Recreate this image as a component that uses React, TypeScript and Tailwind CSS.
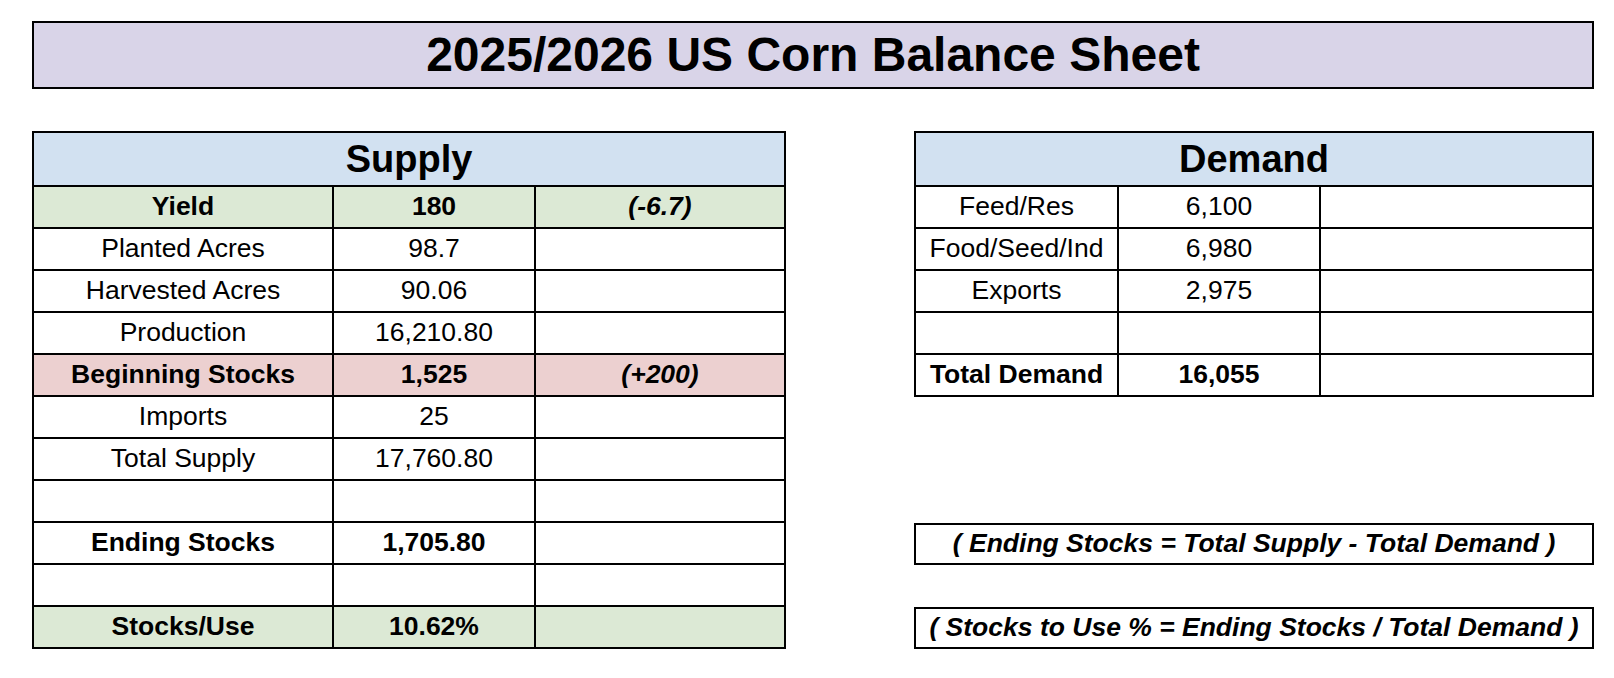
const font = { fontFamily: '"Liberation Sans", Arial, Helvetica, sans-serif' }

type Row = {
  label: string
  value: string
  note?: string
  bold?: boolean
  tone?: "green" | "pink"
}

const supplyRows: Row[] = [
  { label: "Yield", value: "180", note: "(-6.7)", bold: true, tone: "green" },
  { label: "Planted Acres", value: "98.7" },
  { label: "Harvested Acres", value: "90.06" },
  { label: "Production", value: "16,210.80" },
  { label: "Beginning Stocks", value: "1,525", note: "(+200)", bold: true, tone: "pink" },
  { label: "Imports", value: "25" },
  { label: "Total Supply", value: "17,760.80" },
  { label: "", value: "" },
  { label: "Ending Stocks", value: "1,705.80", bold: true },
  { label: "", value: "" },
  { label: "Stocks/Use", value: "10.62%", bold: true, tone: "green" },
]

const demandRows: Row[] = [
  { label: "Feed/Res", value: "6,100" },
  { label: "Food/Seed/Ind", value: "6,980" },
  { label: "Exports", value: "2,975" },
  { label: "", value: "" },
  { label: "Total Demand", value: "16,055", bold: true },
]

function toneClass(tone?: Row["tone"]) {
  if (tone === "green") return "bg-[#dce9d5]"
  if (tone === "pink") return "bg-[#ecd0d0]"
  return "bg-white"
}

function TableRow({ row, cols }: { row: Row; cols: string }) {
  return (
    <div
      className={`grid h-[42px] border-t-2 border-black text-[26.5px] text-black ${cols} ${toneClass(row.tone)} ${
        row.bold ? "font-bold" : ""
      }`}
    >
      <div className="flex items-center justify-center whitespace-nowrap">{row.label}</div>
      <div className="flex items-center justify-center border-l-2 border-black">{row.value}</div>
      <div className="flex items-center justify-center border-l-2 border-black italic">{row.note}</div>
    </div>
  )
}

function BalanceTable({
  title,
  rows,
  cols,
  width,
}: {
  title: string
  rows: Row[]
  cols: string
  width: string
}) {
  return (
    <div className={`${width} border-2 border-black`}>
      <div className="flex h-[52px] items-center justify-center bg-[#d2e1f1] text-[38px] font-bold text-black">
        {title}
      </div>
      {rows.map((row, i) => (
        <TableRow key={i} row={row} cols={cols} />
      ))}
    </div>
  )
}

function FormulaBox({ text }: { text: string }) {
  return (
    <div className="flex h-[42px] items-center justify-center whitespace-nowrap border-2 border-black bg-white text-[26.5px] font-bold italic text-black">
      {text}
    </div>
  )
}

export default function App() {
  return (
    <div className="min-h-screen bg-white pl-[32px] pt-[21px]" style={font}>
      {/* Title */}
      <div className="flex h-[68px] w-[1562px] items-center justify-center border-2 border-black bg-[#d9d4e8]">
        <h1 className="text-[48px] font-bold text-black">2025/2026 US Corn Balance Sheet</h1>
      </div>

      <div className="mt-[42px] flex items-start gap-[128px]">
        {/* Supply */}
        <BalanceTable
          title="Supply"
          rows={supplyRows}
          cols="grid-cols-[298px_202px_1fr]"
          width="w-[754px]"
        />

        {/* Demand + formulas */}
        <div className="flex w-[680px] flex-col">
          <BalanceTable
            title="Demand"
            rows={demandRows}
            cols="grid-cols-[201px_202px_1fr]"
            width="w-[680px]"
          />
          <div className="mt-[126px] flex flex-col gap-[42px]">
            <FormulaBox text="( Ending Stocks = Total Supply - Total Demand )" />
            <FormulaBox text="( Stocks to Use % = Ending Stocks / Total Demand )" />
          </div>
        </div>
      </div>
    </div>
  )
}
